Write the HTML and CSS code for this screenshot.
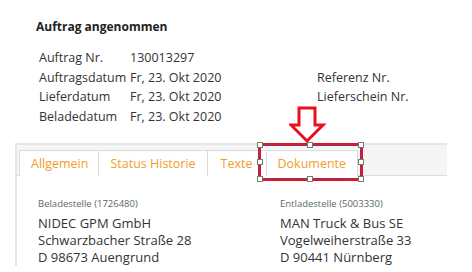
FILE: index.html
```html
<!DOCTYPE html>
<html lang="de">
<head>
<meta charset="UTF-8" />
<meta name="viewport" content="width=device-width, initial-scale=1" />
<title>Auftrag angenommen</title>
<link rel="stylesheet" href="styles.css">
</head>
<body>

<div class="page">
  <h2 class="title">Auftrag angenommen</h2>

  <div class="facts">
    <span class="label">Auftrag Nr.</span><span class="value">130013297</span><span></span><span></span>
    <span class="label">Auftragsdatum</span><span class="value">Fr, 23. Okt 2020</span><span class="label">Referenz Nr.</span><span></span>
    <span class="label">Lieferdatum</span><span class="value">Fr, 23. Okt 2020</span><span class="label">Lieferschein Nr.</span><span></span>
    <span class="label">Beladedatum</span><span class="value">Fr, 23. Okt 2020</span><span></span><span></span>
  </div>

  <div class="tabbox">
    <ul class="tabs">
      <li class="tab active">Allgemein</li>
      <li class="tab">Status Historie</li>
      <li class="tab tab-wide">Texte</li>
      <li class="tab">Dokumente</li>
    </ul>
    <div class="panel">
      <div class="addr">
        <div class="addr-head">Beladestelle (1726480)</div>
        <div>NIDEC GPM GmbH</div>
        <div>Schwarzbacher Straße 28</div>
        <div>D 98673 Auengrund</div>
      </div>
      <div class="addr">
        <div class="addr-head">Entladestelle (5003330)</div>
        <div>MAN Truck &amp; Bus SE</div>
        <div>Vogelweiherstraße 33</div>
        <div>D 90441 Nürnberg</div>
      </div>
    </div>
  </div>

  <!-- Markierung auf dem Tab "Dokumente" -->
  <svg class="arrow" width="38" height="38" viewBox="0 0 38 38">
    <path d="M10 2 H26 V19 H34 L18 35 L2 19 H10 Z" fill="#fff" stroke="#e8101c" stroke-width="3" stroke-linejoin="miter"/>
  </svg>
  <div class="mark">
    <span class="h h1"></span><span class="h h2"></span><span class="h h3"></span>
    <span class="h h4"></span><span class="h h5"></span>
    <span class="h h6"></span><span class="h h7"></span><span class="h h8"></span>
  </div>
</div>

</body>
</html>
```

FILE: styles.css
```css
body {
  margin: 0;
  background: #fff;
  color: #333;
  font-family: 'Open Sans', 'Noto Sans', sans-serif;
}

.page {
  position: relative;
  width: 472px;
  height: 272px;
  overflow: hidden;
}

.title {
  margin: 0;
  padding: 18px 0 0 36px;
  font-size: 12px;
  line-height: 18px;
  font-weight: 700;
  color: #222;
}

.facts {
  display: grid;
  grid-template-columns: 91px 187px auto 1fr;
  grid-auto-rows: 19.5px;
  align-items: center;
  margin: 12px 0 0 39px;
  font-size: 12.5px;
}

.facts span {
  white-space: nowrap;
}

.tabbox {
  margin: 17px 25px 0 15px;
  border-left: 2px solid #e6e6e6;
}

.tabs {
  display: flex;
  list-style: none;
  margin: 0;
  padding: 5px 0 0 2px;
  background: #f5f5f5;
  border-top: 2px solid #e6e6e6;
  border-bottom: 1px solid #dcdcdc;
  height: 25px;
}

.tab {
  background: #fff;
  border: 1px solid #dcdcdc;
  border-bottom: none;
  margin-bottom: -1px;
  padding: 0 11px;
  font-size: 12.5px;
  line-height: 26px;
  color: #f59c2a;
}

.tab + .tab {
  border-left: none;
}

.tab-wide {
  padding: 0 13px;
}

.tab.active {
  position: relative;
  z-index: 1;
  padding: 0 10px 0 11px;
}

.panel {
  display: flex;
  padding: 21px 0 0 21px;
}

.addr {
  flex: none;
  width: 242px;
  font-size: 13px;
  line-height: 17px;
  color: #333;
}

.addr-head {
  font-size: 9.5px;
  line-height: 14px;
  margin-bottom: 4px;
  color: #5a6b5e;
}

/* Markierung */
.arrow {
  position: absolute;
  left: 289px;
  top: 106px;
}

.mark {
  position: absolute;
  left: 258px;
  top: 143px;
  width: 105px;
  height: 38px;
  box-sizing: border-box;
  border: 3px solid #e8101c;
  outline: 1px dashed #3d5aa8;
  outline-offset: -2px;
}

.h {
  position: absolute;
  width: 4px;
  height: 4px;
  background: #fff;
  border: 1px solid #777;
}
.h1 { left: -4px; top: -4px; }
.h2 { left: 46px; top: -4px; }
.h3 { right: -4px; top: -4px; }
.h4 { left: -4px; top: 13px; }
.h5 { right: -4px; top: 13px; }
.h6 { left: -4px; bottom: -4px; }
.h7 { left: 46px; bottom: -4px; }
.h8 { right: -4px; bottom: -4px; }
```
